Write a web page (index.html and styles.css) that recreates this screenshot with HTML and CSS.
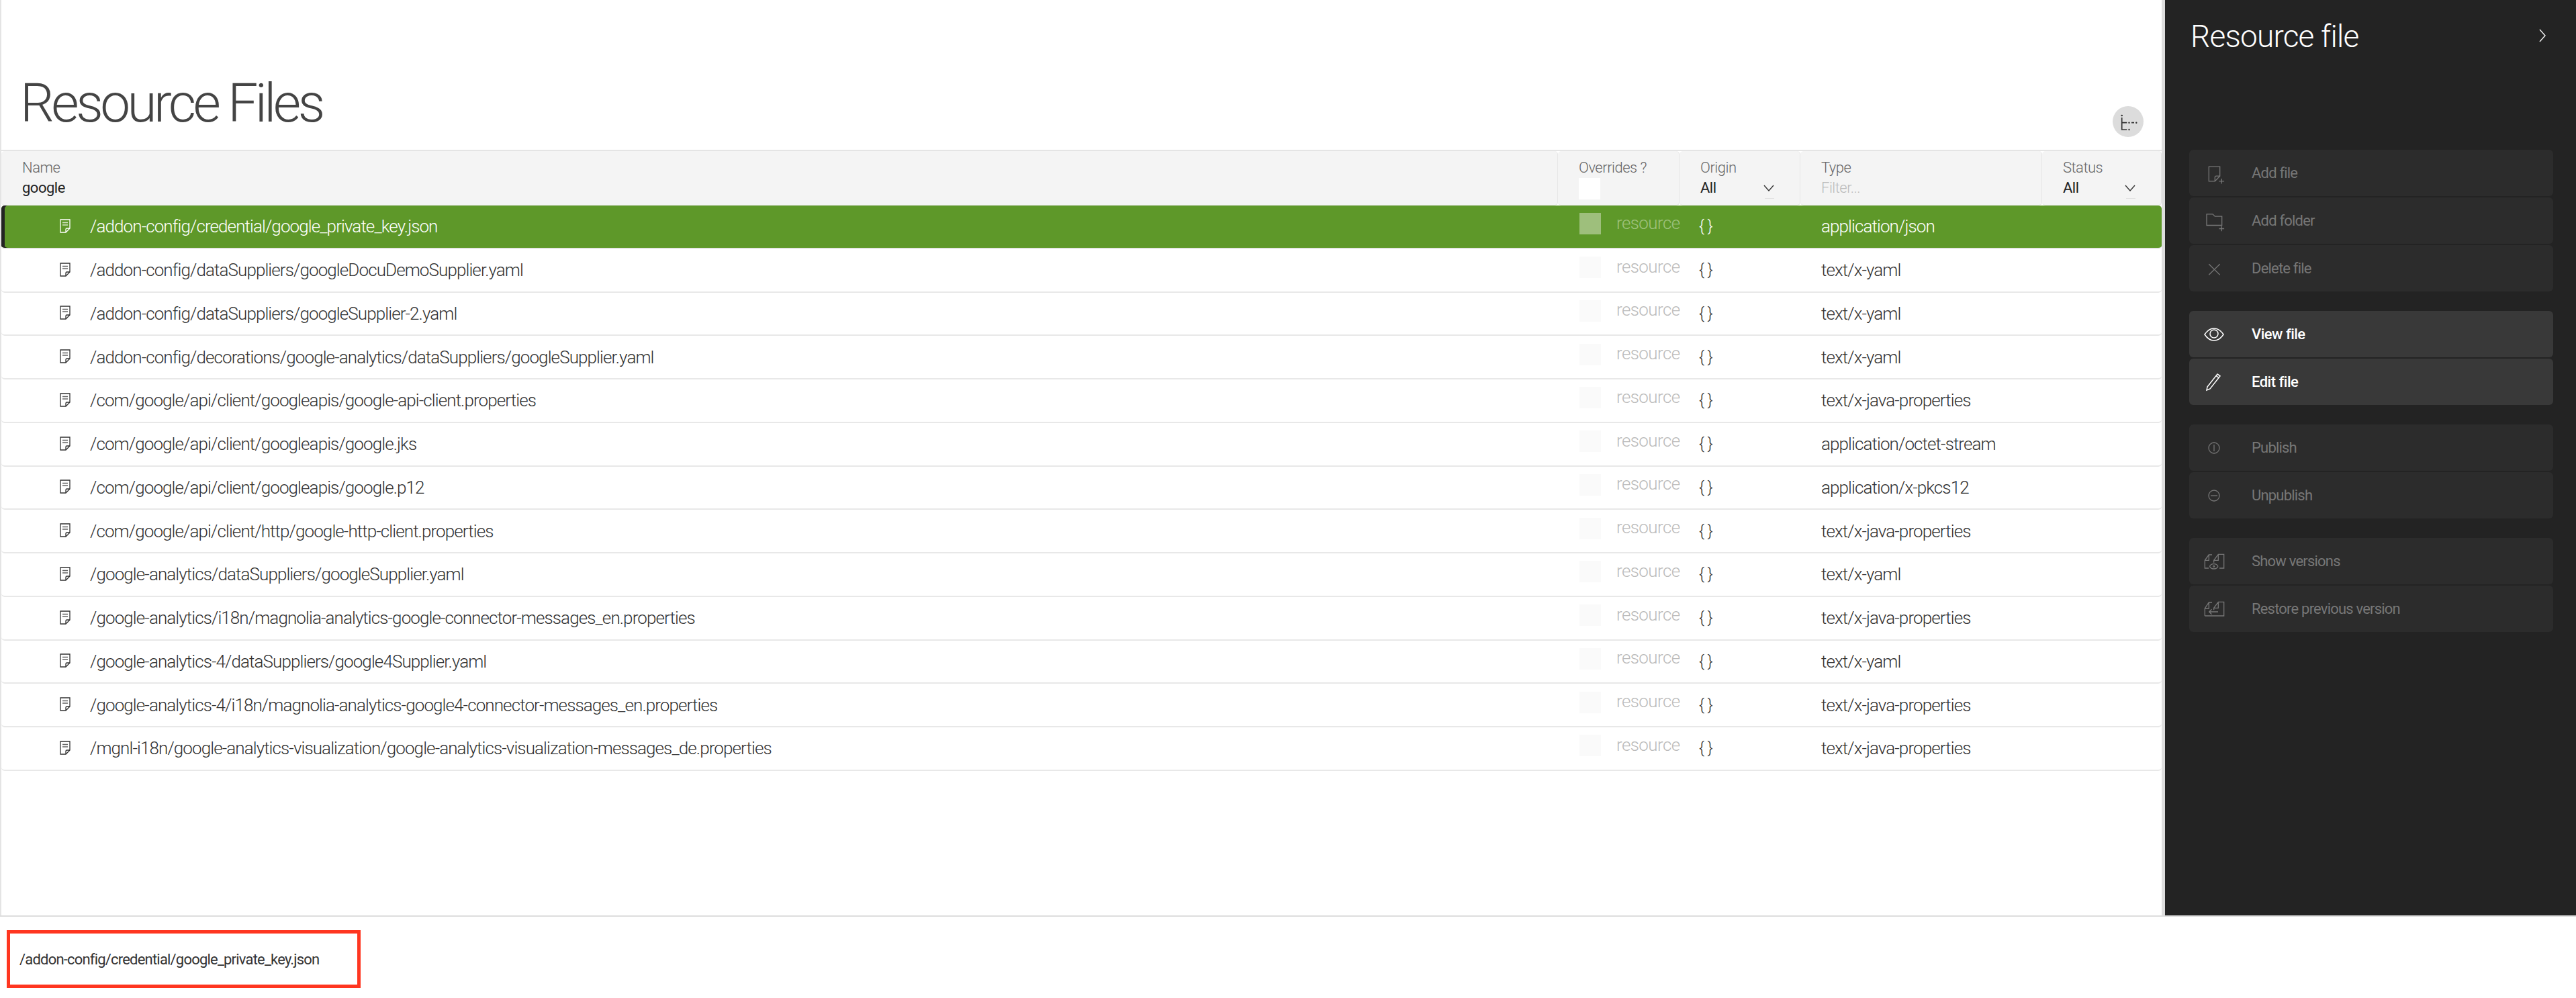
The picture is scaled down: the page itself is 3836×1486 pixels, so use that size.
FILE: index.html
```html
<!DOCTYPE html>
<html lang="en">
<head>
  <meta charset="UTF-8" />
  <title>Resource Files</title>
  <link rel="stylesheet" href="styles.css">
</head>
<body>
<svg class="defs" width="0" height="0">
  <symbol id="file" viewBox="0 0 16 21">
    <path d="M1 1h14v13l-6 6H1z M15 14H10.500a1.500 1.500 0 0 0-1.500 1.500V20" fill="none" stroke="currentColor" stroke-width="1.300"/>
    <path d="M4 5.500h8M4 9h8" fill="none" stroke="currentColor" stroke-width="1.300" opacity="0.75"/>
  </symbol>
  <symbol id="chevron" viewBox="0 0 16 10">
    <path d="M1 1l7 8 7-8" fill="none" stroke="currentColor" stroke-width="1.400"/>
  </symbol>
</svg>

<div class="top">
  <main class="main">
    <div class="heading">
      <h1>Resource Files</h1>
      <button class="tree-btn">
        <svg width="46" height="46" viewBox="0 0 46 46" fill="none" stroke="#333" stroke-width="1.700">
          <circle cx="13.700" cy="14" r="1.300" fill="#333" stroke="none"/>
          <path d="M13.700 17v18h7.600M13.700 24.700h7.600M28 24.700h4"/>
          <circle cx="24.500" cy="24.700" r="1.200" fill="#333" stroke="none"/>
          <circle cx="35.300" cy="24.700" r="1.200" fill="#333" stroke="none"/>
          <circle cx="24.500" cy="35" r="1.200" fill="#333" stroke="none"/>
        </svg>
      </button>
    </div>

    <div class="table">
      <div class="head">
        <div class="hcell">
          <span class="hlabel">Name</span>
          <span class="hvalue">google</span>
        </div>
        <div class="hcell">
          <span class="hlabel">Overrides ?</span>
          <span class="hcheck"></span>
        </div>
        <div class="hcell">
          <span class="hlabel">Origin</span>
          <span class="hvalue select">All <svg class="chev" width="16" height="10"><use href="#chevron"/></svg></span>
        </div>
        <div class="hcell">
          <span class="hlabel">Type</span>
          <span class="hvalue filter">Filter...</span>
        </div>
        <div class="hcell">
          <span class="hlabel">Status</span>
          <span class="hvalue select">All <svg class="chev" width="16" height="10"><use href="#chevron"/></svg></span>
        </div>
      </div>

      <div class="row selected">
        <div class="name"><svg class="ficon" width="16" height="21"><use href="#file"/></svg>/addon-config/credential/google_private_key.json</div>
        <div class="over"><span class="check"></span><span class="res">resource</span></div>
        <div class="origin">{ }</div>
        <div class="type">application/json</div>
        <div></div>
      </div>
      <div class="row">
        <div class="name"><svg class="ficon" width="16" height="21"><use href="#file"/></svg>/addon-config/dataSuppliers/googleDocuDemoSupplier.yaml</div>
        <div class="over"><span class="check"></span><span class="res">resource</span></div>
        <div class="origin">{ }</div>
        <div class="type">text/x-yaml</div>
        <div></div>
      </div>
      <div class="row">
        <div class="name"><svg class="ficon" width="16" height="21"><use href="#file"/></svg>/addon-config/dataSuppliers/googleSupplier-2.yaml</div>
        <div class="over"><span class="check"></span><span class="res">resource</span></div>
        <div class="origin">{ }</div>
        <div class="type">text/x-yaml</div>
        <div></div>
      </div>
      <div class="row">
        <div class="name"><svg class="ficon" width="16" height="21"><use href="#file"/></svg>/addon-config/decorations/google-analytics/dataSuppliers/googleSupplier.yaml</div>
        <div class="over"><span class="check"></span><span class="res">resource</span></div>
        <div class="origin">{ }</div>
        <div class="type">text/x-yaml</div>
        <div></div>
      </div>
      <div class="row">
        <div class="name"><svg class="ficon" width="16" height="21"><use href="#file"/></svg>/com/google/api/client/googleapis/google-api-client.properties</div>
        <div class="over"><span class="check"></span><span class="res">resource</span></div>
        <div class="origin">{ }</div>
        <div class="type">text/x-java-properties</div>
        <div></div>
      </div>
      <div class="row">
        <div class="name"><svg class="ficon" width="16" height="21"><use href="#file"/></svg>/com/google/api/client/googleapis/google.jks</div>
        <div class="over"><span class="check"></span><span class="res">resource</span></div>
        <div class="origin">{ }</div>
        <div class="type">application/octet-stream</div>
        <div></div>
      </div>
      <div class="row">
        <div class="name"><svg class="ficon" width="16" height="21"><use href="#file"/></svg>/com/google/api/client/googleapis/google.p12</div>
        <div class="over"><span class="check"></span><span class="res">resource</span></div>
        <div class="origin">{ }</div>
        <div class="type">application/x-pkcs12</div>
        <div></div>
      </div>
      <div class="row">
        <div class="name"><svg class="ficon" width="16" height="21"><use href="#file"/></svg>/com/google/api/client/http/google-http-client.properties</div>
        <div class="over"><span class="check"></span><span class="res">resource</span></div>
        <div class="origin">{ }</div>
        <div class="type">text/x-java-properties</div>
        <div></div>
      </div>
      <div class="row">
        <div class="name"><svg class="ficon" width="16" height="21"><use href="#file"/></svg>/google-analytics/dataSuppliers/googleSupplier.yaml</div>
        <div class="over"><span class="check"></span><span class="res">resource</span></div>
        <div class="origin">{ }</div>
        <div class="type">text/x-yaml</div>
        <div></div>
      </div>
      <div class="row">
        <div class="name"><svg class="ficon" width="16" height="21"><use href="#file"/></svg>/google-analytics/i18n/magnolia-analytics-google-connector-messages_en.properties</div>
        <div class="over"><span class="check"></span><span class="res">resource</span></div>
        <div class="origin">{ }</div>
        <div class="type">text/x-java-properties</div>
        <div></div>
      </div>
      <div class="row">
        <div class="name"><svg class="ficon" width="16" height="21"><use href="#file"/></svg>/google-analytics-4/dataSuppliers/google4Supplier.yaml</div>
        <div class="over"><span class="check"></span><span class="res">resource</span></div>
        <div class="origin">{ }</div>
        <div class="type">text/x-yaml</div>
        <div></div>
      </div>
      <div class="row">
        <div class="name"><svg class="ficon" width="16" height="21"><use href="#file"/></svg>/google-analytics-4/i18n/magnolia-analytics-google4-connector-messages_en.properties</div>
        <div class="over"><span class="check"></span><span class="res">resource</span></div>
        <div class="origin">{ }</div>
        <div class="type">text/x-java-properties</div>
        <div></div>
      </div>
      <div class="row">
        <div class="name"><svg class="ficon" width="16" height="21"><use href="#file"/></svg>/mgnl-i18n/google-analytics-visualization/google-analytics-visualization-messages_de.properties</div>
        <div class="over"><span class="check"></span><span class="res">resource</span></div>
        <div class="origin">{ }</div>
        <div class="type">text/x-java-properties</div>
        <div></div>
      </div>
    </div>
  </main>

  <aside class="side">
    <div class="side-head">
      <h2>Resource file</h2>
      <svg width="12" height="22" viewBox="0 0 12 22" fill="none" stroke="#eee" stroke-width="1.500"><path d="M2 2l8 9-8 9"/></svg>
    </div>

    <div class="group">
      <div class="action">
        <svg class="aicon" width="32" height="34" viewBox="0 0 32 34" fill="none" stroke="currentColor" stroke-width="1.300">
          <path d="M8.300 7.200h16.400v14l-7.400 7.600H8.300z M24.700 21.200h-5.400a2 2 0 0 0-2 2v5.600"/>
          <path d="M27.300 25v7.600M23.500 28.800h7.600"/>
        </svg>
        Add file
      </div>
      <div class="action">
        <svg class="aicon" width="32" height="34" viewBox="0 0 32 34" fill="none" stroke="currentColor" stroke-width="1.300">
          <path d="M5 6.800h9l3.300 3.400h10.400v13.300H5z"/>
          <path d="M27.300 24.700v7.600M23.500 28.500h7.600"/>
        </svg>
        Add folder
      </div>
      <div class="action">
        <svg class="aicon" width="32" height="34" viewBox="0 0 32 34" fill="none" stroke="currentColor" stroke-width="1.300">
          <path d="M8.300 10.200l16.400 16.100M24.700 10.200L8.300 26.300"/>
        </svg>
        Delete file
      </div>
    </div>

    <div class="group">
      <div class="action on">
        <svg class="aicon" width="32" height="34" viewBox="0 0 32 34" fill="none" stroke="currentColor" stroke-width="1.500">
          <path d="M2 17c4-6 9-9 14-9s10 3 14 9c-4 6-9 9-14 9S6 23 2 17z"/>
          <circle cx="16" cy="16" r="6"/>
        </svg>
        View file
      </div>
      <div class="action on">
        <svg class="aicon" width="32" height="34" viewBox="0 0 32 34" fill="none" stroke="currentColor" stroke-width="1.500">
          <path d="M6 24L21 5l4 3L10 27l-5 2z M19 7.500l4 3"/>
        </svg>
        Edit file
      </div>
    </div>

    <div class="group">
      <div class="action">
        <svg class="aicon" width="32" height="34" viewBox="0 0 32 34" fill="none" stroke="currentColor" stroke-width="1.300">
          <circle cx="16" cy="17" r="8"/>
          <path d="M16 12v10"/>
        </svg>
        Publish
      </div>
      <div class="action">
        <svg class="aicon" width="32" height="34" viewBox="0 0 32 34" fill="none" stroke="currentColor" stroke-width="1.300">
          <circle cx="16" cy="17" r="8"/>
          <path d="M11 17h10"/>
        </svg>
        Unpublish
      </div>
    </div>

    <div class="group">
      <div class="action">
        <svg class="aicon" width="32" height="34" viewBox="0 0 32 34" fill="none" stroke="currentColor" stroke-width="1.300">
          <path d="M8 27H2.300V15.300L8.300 7H13M8.300 7v8.300H2.300"/>
          <path d="M15.700 18.700v-3.400L22.300 6.300h8.400V27H24M22.300 6.300v9h-6.600"/>
          <ellipse cx="15.700" cy="24.300" rx="6" ry="3.700"/>
          <circle cx="15.700" cy="24.300" r="1"/>
        </svg>
        Show versions
      </div>
      <div class="action">
        <svg class="aicon" width="32" height="34" viewBox="0 0 32 34" fill="none" stroke="currentColor" stroke-width="1.300">
          <path d="M2.300 27V16L8.300 7H13M8.300 7v9H2.300M2.300 27h28.400V6.300h-8.400l-6.600 9v3M22.300 6.300v9h-6.600"/>
          <path d="M22 21H8.700M12.500 17.200L8.700 21l3.800 3.800"/>
        </svg>
        Restore previous version
      </div>
    </div>
  </aside>
</div>

<footer class="bottom">
  <div class="path-box">/addon-config/credential/google_private_key.json</div>
</footer>
</body>
</html>
```

FILE: styles.css
```css
* {
  box-sizing: border-box;
}

html, body {
  margin: 0;
  height: 100%;
}

body {
  font-family: Roboto, sans-serif;
  font-weight: 300;
  color: #333;
  background-color: #fff;
  display: flex;
  flex-direction: column;
}

.defs {
  position: absolute;
}

.top {
  height: 1363px;
  display: flex;
}

.main {
  flex: 1;
  background-color: #fff;
  border-left: 2px solid #e4e4e4;
  border-right: 5px solid #dedede;
}

.heading {
  height: 223px;
  display: flex;
  justify-content: space-between;
  align-items: flex-start;
  padding: 112px 27px 0 28px;
}

h1 {
  margin: 0;
  font-size: 80px;
  font-weight: 300;
  letter-spacing: -4.500px;
  line-height: 84px;
  color: #444;
}

.tree-btn {
  width: 46px;
  height: 46px;
  margin-top: 46px;
  padding: 0;
  border: none;
  border-radius: 50%;
  background-color: #dcdcdc;
  display: flex;
}

.head, .row {
  display: grid;
  grid-template-columns: 2318px 181px 180px 360px 1fr;
}

.head {
  height: 83px;
  border-top: 2px solid #e4e4e4;
}

.hcell {
  background-color: #f4f4f4;
  border-radius: 5px;
  border-right: 1px solid #e6e6e6;
  border-bottom: 1px solid #e6e6e6;
  padding: 12px 35px 0 31px;
  display: flex;
  flex-direction: column;
}

.hlabel {
  font-size: 22px;
  line-height: 26px;
  letter-spacing: -0.500px;
  color: #666;
}

.hvalue {
  font-size: 22px;
  line-height: 30px;
  margin-top: 2px;
  font-weight: 400;
  letter-spacing: -0.500px;
  color: #222;
}

.filter {
  color: #bbb;
  font-weight: 300;
}

.select {
  position: relative;
  display: flex;
  justify-content: space-between;
  align-items: center;
}

.select::after {
  content: "";
  position: absolute;
  right: 3px;
  bottom: -1px;
  width: 14px;
  height: 1px;
  background-color: #e2e2e2;
}

.chev {
  color: #333;
  margin-right: 3px;
}

.hcheck {
  width: 32px;
  height: 32px;
  background-color: #fff;
  margin-top: 2px;
}

.row {
  height: 64.750px;
  align-items: center;
  font-size: 26px;
  letter-spacing: -0.900px;
  border-bottom: 2px solid #e8e8e8;
  border-radius: 5px;
  background-color: #fff;
}

.row.selected {
  background-color: #5e9829;
  color: #fff;
  box-shadow: inset 5px 0 #232323;
}

.name {
  display: flex;
  align-items: center;
  padding-left: 87px;
  white-space: nowrap;
}

.ficon {
  margin-right: 29px;
  margin-bottom: 2px;
  flex: none;
}

.over {
  display: flex;
  align-items: center;
  padding-left: 32px;
  padding-bottom: 8px;
  white-space: nowrap;
}

.check {
  width: 32px;
  height: 32px;
  margin-right: 23px;
  background-color: #fafafa;
  flex: none;
}

.res {
  color: #bbb;
  letter-spacing: -0.600px;
  margin-bottom: 3px;
}

.selected .check {
  background-color: #9ebf7c;
}

.selected .res {
  color: #a0c27e;
}

.origin {
  padding-left: 29px;
  font-size: 24px;
  letter-spacing: -0.500px;
}

.type {
  padding-left: 31px;
}

.side {
  width: 612px;
  background-color: #232323;
  padding: 0 34px 0 36px;
}

.side-head {
  height: 223px;
  display: flex;
  justify-content: space-between;
  align-items: flex-start;
  padding: 24px 10px 0 2px;
  color: #fff;
}

.side-head svg {
  margin-top: 18px;
}

h2 {
  margin: 0;
  font-size: 46px;
  font-weight: 300;
  letter-spacing: -0.800px;
  line-height: 60px;
}

.group {
  display: flex;
  flex-direction: column;
  gap: 2px;
  margin-bottom: 29px;
}

.action {
  height: 69px;
  border-radius: 6px;
  background-color: #2c2c2c;
  color: #777;
  font-size: 22px;
  font-weight: 400;
  letter-spacing: -0.800px;
  display: flex;
  align-items: center;
  padding-left: 21px;
}

.action.on {
  background-color: #393939;
  color: #fff;
  font-weight: 500;
  letter-spacing: -0.500px;
}

.aicon {
  margin-right: 40px;
  flex: none;
}

.bottom {
  flex: 1;
  border-top: 2px solid #ddd;
  padding: 20px 0 0 10px;
}

.path-box {
  width: 527px;
  height: 86px;
  border: 5px solid #ff3620;
  padding-left: 14px;
  display: flex;
  align-items: center;
  font-size: 22px;
  font-weight: 400;
  letter-spacing: -0.800px;
  color: #333;
}
```
